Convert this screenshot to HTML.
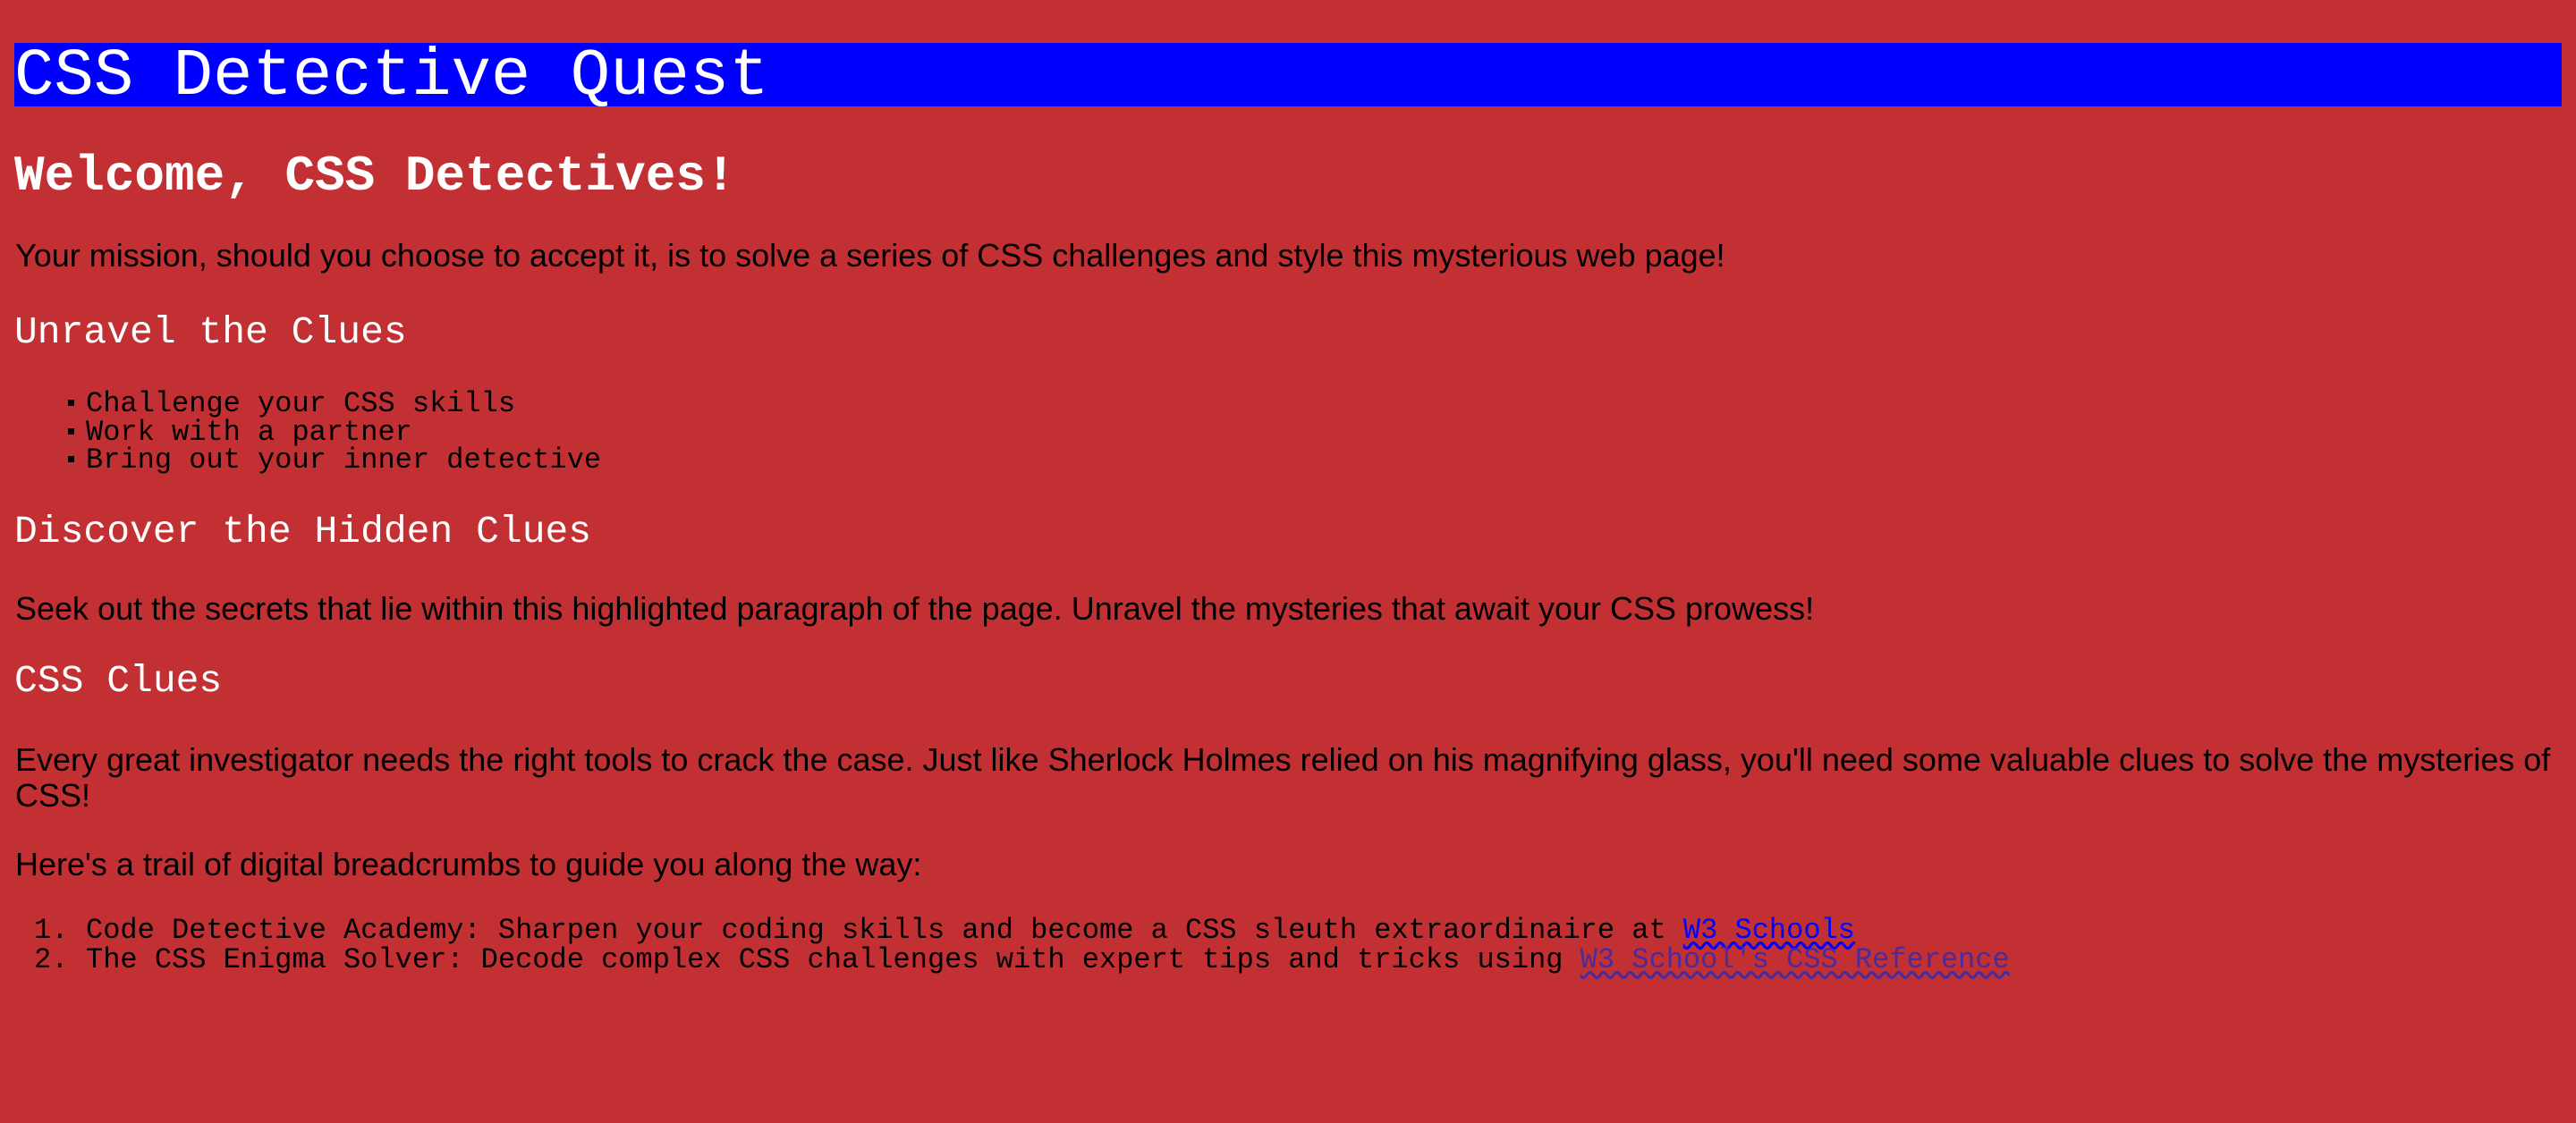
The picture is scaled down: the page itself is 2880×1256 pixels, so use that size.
<!DOCTYPE html>
<html><head><meta charset="utf-8"><style>
html,body{margin:0;padding:0;}
body{width:2880px;height:1256px;background:#c33033;position:relative;overflow:hidden;}
.m{font-family:"Liberation Mono",monospace;position:absolute;white-space:pre;line-height:normal;}
.s{font-family:"Liberation Sans",Arial,sans-serif;position:absolute;white-space:pre;line-height:normal;font-size:36px;color:#000;left:17px;}
.w{color:#fff;font-weight:bold;left:16px;}
.li{font-size:32px;color:#000;left:96px;}
.b{position:absolute;left:76px;width:7px;height:7px;background:#000;}
.n{font-family:"Liberation Mono",monospace;position:absolute;font-size:32px;color:#000;left:38px;line-height:normal;}
a{text-decoration:underline wavy;text-underline-offset:4px;}
</style></head><body>
<div style="position:absolute;left:16px;top:48px;width:2848px;height:71px;background:#0000ff;"></div>
<div class="m" style="left:16px;top:44px;font-size:74px;color:#fff;">CSS Detective Quest</div>
<div class="m w" style="top:165px;font-size:56px;">Welcome, CSS Detectives!</div>
<div class="s" style="top:265px;">Your mission, should you choose to accept it, is to solve a series of CSS challenges and style this mysterious web page!</div>
<div class="m w" style="top:347px;font-size:43px;font-weight:normal;">Unravel the Clues</div>
<div class="b" style="top:447px"></div><div class="m li" style="top:433px;">Challenge your CSS skills</div>
<div class="b" style="top:479px"></div><div class="m li" style="top:465px;">Work with a partner</div>
<div class="b" style="top:510px"></div><div class="m li" style="top:496px;">Bring out your inner detective</div>
<div class="m w" style="top:570px;font-size:43px;font-weight:normal;">Discover the Hidden Clues</div>
<div class="s" style="top:660px;">Seek out the secrets that lie within this highlighted paragraph of the page. Unravel the mysteries that await your CSS prowess!</div>
<div class="m w" style="top:737px;font-size:43px;font-weight:normal;">CSS Clues</div>
<div class="s" style="top:829px;">Every great investigator needs the right tools to crack the case. Just like Sherlock Holmes relied on his magnifying glass, you'll need some valuable clues to solve the mysteries of</div>
<div class="s" style="top:869px;">CSS!</div>
<div class="s" style="top:946px;">Here's a trail of digital breadcrumbs to guide you along the way:</div>
<div class="n" style="top:1022px;">1.</div>
<div class="m li" style="top:1022px;">Code Detective Academy: Sharpen your coding skills and become a CSS sleuth extraordinaire at <a style="color:#0000ff">W3 Schools</a></div>
<div class="n" style="top:1055px;">2.</div>
<div class="m li" style="top:1055px;">The CSS Enigma Solver: Decode complex CSS challenges with expert tips and tricks using <a style="color:#4b2a9a">W3 School's CSS Reference</a></div>
</body></html>
